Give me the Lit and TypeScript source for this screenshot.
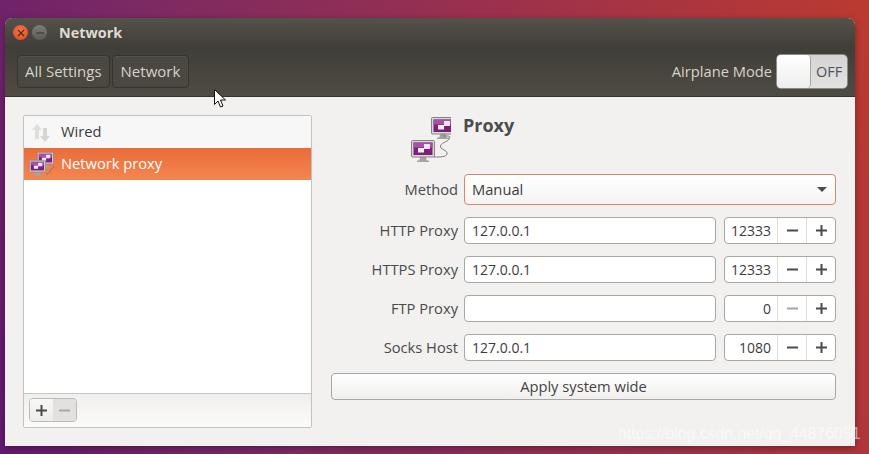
import { LitElement, html, css, svg } from "lit";
import { customElement } from "lit/decorators.js";

const monitor = (x: number, y: number, s: number) => svg`
  <g transform="translate(${x} ${y}) scale(${s})">
    <path d="M9 17h6l.6 3.500H18v1.500H6v-1.500h2.400z" fill="#a3a39f"/>
    <rect x=".5" y=".5" width="23" height="16.500" rx="1" fill="#d8d8d6" stroke="#85857f"/>
    <rect x="2.500" y="2.500" width="19" height="12.500" fill="#7e1f7e"/>
    <rect x="2.500" y="2.500" width="19" height="5" fill="#a453a4"/>
    <rect x="13" y="4" width="6" height="5" fill="#f0e4f0"/>
    <rect x="7" y="8" width="6" height="4.500" fill="#f6eff6"/>
  </g>`;

@customElement("app-root")
export class AppRoot extends LitElement {
  static styles = css`
    :host {
      display: block;
      width: 869px;
      height: 454px;
      overflow: hidden;
      position: relative;
      box-sizing: border-box;
      padding: 18px 14px 8px 5px;
      font-family: "Open Sans", "Noto Sans", sans-serif;
      font-size: 14.7px;
      color: #3c3c3c;
      background: linear-gradient(72deg, #641a70 0%, #7c2a63 28%, #99304f 60%, #bb3a30 100%);
    }
    .window {
      height: 100%;
      border-radius: 7px 7px 0 0;
      display: flex;
      flex-direction: column;
      overflow: hidden;
      box-shadow: 0 2px 6px rgba(0, 0, 0, 0.35);
      background: #f2f1f0;
    }
    .title {
      height: 29px;
      flex: none;
      display: flex;
      align-items: center;
      padding-left: 8px;
      gap: 4px;
      background: linear-gradient(#55524a, #403e38);
      color: #dfdbd2;
      font-weight: 700;
      font-size: 14.4px;
    }
    .wbtn {
      width: 15px;
      height: 15px;
      border-radius: 50%;
      display: flex;
      align-items: center;
      justify-content: center;
      border: 0;
    }
    .close { background: radial-gradient(circle at 50% 40%, #f4764a, #d9491d); }
    .min { background: linear-gradient(#7e7c74, #5d5b54); }
    .title-text { margin-left: 8px; }
    .toolbar {
      height: 50px;
      flex: none;
      box-sizing: border-box;
      padding: 8px 7px 8px 12px;
      display: flex;
      align-items: center;
      background: linear-gradient(#403e38, #4e4b43);
      border-bottom: 1px solid #35332e;
      color: #d6d3cb;
    }
    .crumb {
      box-sizing: border-box;
      height: 33px;
      border: 1px solid #36342f;
      background: #4a4840;
      border-radius: 4px;
      padding: 0 7px 1px;
      display: flex;
      align-items: center;
      font-size: 15px;
      box-shadow: inset 0 1px 0 rgba(255, 255, 255, 0.05);
    }
    .crumb + .crumb { margin-left: 2px; padding: 0 8px 1px; }
    .spacer { flex: 1; }
    .airplane { padding-bottom: 1px; }
    .switch {
      margin-left: 4px;
      box-sizing: border-box;
      width: 72px;
      height: 35px;
      flex: none;
      border: 1px solid #8d8b85;
      border-radius: 5px;
      background: linear-gradient(#d6d5d2, #e3e2e0);
      display: flex;
      align-items: center;
      color: #4c5160;
      font-size: 14.5px;
    }
    .knob {
      width: 34px;
      height: 33px;
      flex: none;
      box-sizing: border-box;
      background: linear-gradient(#ffffff, #eeeeed);
      border-right: 1px solid #a8a6a1;
      border-radius: 4px;
    }
    .off { flex: 1; text-align: center; }
    .content {
      flex: 1;
      min-height: 0;
      display: flex;
      padding: 18px 19px 18px 18px;
      gap: 19px;
    }
    .side {
      width: 289px;
      flex: none;
      box-sizing: border-box;
      border: 1px solid #c4c2be;
      border-radius: 2px;
      display: flex;
      flex-direction: column;
    }
    .list { flex: 1; background: #fff; }
    .row {
      height: 32px;
      box-sizing: border-box;
      padding: 0 0 2px 37px;
      display: flex;
      align-items: center;
      position: relative;
    }
    .row.plain { background: #f7f7f7; color: #3c3c3c; }
    .row.sel { background: linear-gradient(#e96c3a, #f58650); color: #fff; }
    .row svg { position: absolute; left: 5px; top: 4px; }
    .side-foot {
      height: 34px;
      flex: none;
      box-sizing: border-box;
      border-top: 1px solid #c9c7c3;
      background: linear-gradient(#f0efee, #fbfbfa);
      padding: 4px 5px;
      display: flex;
      align-items: flex-start;
    }
    .addrem {
      display: flex;
      height: 24px;
      box-sizing: border-box;
      border: 1px solid #bdbbb7;
      border-radius: 4px;
      overflow: hidden;
    }
    .addrem span {
      width: 23px;
      display: flex;
      align-items: center;
      justify-content: center;
      background: linear-gradient(#f7f7f6, #ececeb);
    }
    .addrem span + span { background: #e2e1df; }
    .main {
      flex: 1;
      min-width: 0;
      display: flex;
      flex-direction: column;
    }
    .head {
      height: 59px;
      flex: none;
      display: flex;
      padding-left: 80px;
      gap: 12px;
    }
    .head h1 {
      margin: 0;
      font-size: 18px;
      font-weight: 700;
      color: #4c4c4c;
      line-height: 20px;
    }
    .form { display: flex; flex-direction: column; gap: 12px; }
    .frow {
      display: grid;
      grid-template-columns: 127px 252px 112px;
      column-gap: 6px;
      align-items: center;
      height: 27px;
    }
    .frow .spin { margin-left: 2px; }
    .frow.method { height: 31px; grid-template-columns: 127px 372px; }
    .frow.method label { padding-bottom: 1px; }
    label { text-align: right; color: #4a4a4a; line-height: 25px; }
    .input, .select, .spin, .apply {
      box-sizing: border-box;
      height: 27px;
      border: 1px solid #a9a7a3;
      border-radius: 4px;
      background: #fff;
    }
    .input { padding: 0 7px; line-height: 25px; font-size: 14px; }
    .select {
      height: 31px;
      border-color: #d58b68;
      background: linear-gradient(#ffffff, #f5f4f3);
      padding: 0 8px 1px 7px;
      display: flex;
      align-items: center;
      justify-content: space-between;
    }
    .caret {
      width: 0;
      height: 0;
      border-left: 5px solid transparent;
      border-right: 5px solid transparent;
      border-top: 5px solid #4a4a4a;
    }
    .spin { display: grid; grid-template-columns: 1fr 29px 29px; width: 112px; font-size: 14px; }
    .spin .val { text-align: right; padding-right: 6px; line-height: 25px; }
    .spin .b {
      border-left: 1px solid #dedddb;
      display: flex;
      align-items: center;
      justify-content: center;
    }
    .apply {
      margin-top: 12px;
      text-align: center;
      line-height: 25px;
      background: linear-gradient(#ffffff, #f0efee);
      color: #444;
      flex: none;
    }
    .cursor { position: absolute; left: 214px; top: 89px; }
    .mark {
      position: absolute;
      left: 618px;
      top: 425px;
      font-family: "Liberation Sans", sans-serif;
      font-size: 15.8px;
      color: rgba(255, 255, 255, 0.55);
      white-space: nowrap;
    }
  `;

  private plus(dim = false) {
    const c = dim ? "#a5a5a3" : "#4a4a4a";
    return html`<svg width="11" height="11" viewBox="0 0 11 11"><path d="M0 5.500h11M5.500 0v11" stroke=${c} stroke-width="2"/></svg>`;
  }
  private minus(dim = false) {
    const c = dim ? "#a5a5a3" : "#4a4a4a";
    return html`<svg width="11" height="11" viewBox="0 0 11 11"><path d="M0 5.500h11" stroke=${c} stroke-width="2"/></svg>`;
  }

  private field(name: string, host: string, port: string, dim = false) {
    return html`<div class="frow">
      <label>${name}</label>
      <div class="input">${host}</div>
      <div class="spin">
        <div class="val">${port}</div>
        <div class="b">${this.minus(dim)}</div>
        <div class="b">${this.plus()}</div>
      </div>
    </div>`;
  }

  render() {
    return html`
      <div class="window">
        <div class="title">
          <div class="wbtn close">
            <svg width="8" height="8" viewBox="0 0 8 8"><path d="M1 1l6 6M7 1L1 7" stroke="#5a2412" stroke-width="1.100"/></svg>
          </div>
          <div class="wbtn min">
            <svg width="8" height="8" viewBox="0 0 8 8"><path d="M0 4h8" stroke="#35332e" stroke-width="1.200"/></svg>
          </div>
          <span class="title-text">Network</span>
        </div>
        <div class="toolbar">
          <div class="crumb">All Settings</div>
          <div class="crumb">Network</div>
          <div class="spacer"></div>
          <span class="airplane">Airplane Mode</span>
          <div class="switch"><div class="knob"></div><div class="off">OFF</div></div>
        </div>
        <div class="content">
          <div class="side">
            <div class="list">
              <div class="row plain">
                <svg width="22" height="24" viewBox="0 0 22 24">
                  <path d="M8 4l5 6h-3v9H6v-9H3z" fill="#dfded9"/>
                  <path d="M16 22l-5-6h3V8h4v8h3z" fill="#d6d5d0"/>
                </svg>
                Wired
              </div>
              <div class="row sel">
                <svg width="26" height="26" viewBox="0 0 26 26">
                  ${monitor(8, 0, 0.7)}
                  <path d="M25 14c1 3-5 2-4 5 .6 2-2 3-4 3" fill="none" stroke="#7d7d78" stroke-width=".9"/>
                  ${monitor(0, 8, 0.7)}
                </svg>
                Network proxy
              </div>
            </div>
            <div class="side-foot">
              <div class="addrem">
                <span>${this.plus()}</span>
                <span>${this.minus(true)}</span>
              </div>
            </div>
          </div>
          <div class="main">
            <div class="head">
              <svg width="40" height="47" viewBox="0 0 40 47">
                ${monitor(20, 2, 1)}
                <path d="M32 21h5c3 0 2 3-1 5-4 2-8 4-6 7 2 2 7 3 6 6-1 3-6 3-13 3" fill="none" stroke="#7d7d78" stroke-width="1"/>
                ${monitor(0, 25, 1)}
              </svg>
              <h1>Proxy</h1>
            </div>
            <div class="form">
              <div class="frow method">
                <label>Method</label>
                <div class="select">Manual<span class="caret"></span></div>
              </div>
              ${this.field("HTTP Proxy", "127.0.0.1", "12333")}
              ${this.field("HTTPS Proxy", "127.0.0.1", "12333")}
              ${this.field("FTP Proxy", "", "0", true)}
              ${this.field("Socks Host", "127.0.0.1", "1080")}
            </div>
            <div class="apply">Apply system wide</div>
          </div>
        </div>
      </div>
      <svg class="cursor" width="14" height="20" viewBox="0 0 14 20">
        <path d="M.5.5v15l3.500-3.500 2.500 6 2.500-1-2.500-6h5z" fill="#fff" stroke="#111" stroke-width="1"/>
      </svg>
      <div class="mark">https://blog.csdn.net/qq_44876051</div>
    `;
  }
}
